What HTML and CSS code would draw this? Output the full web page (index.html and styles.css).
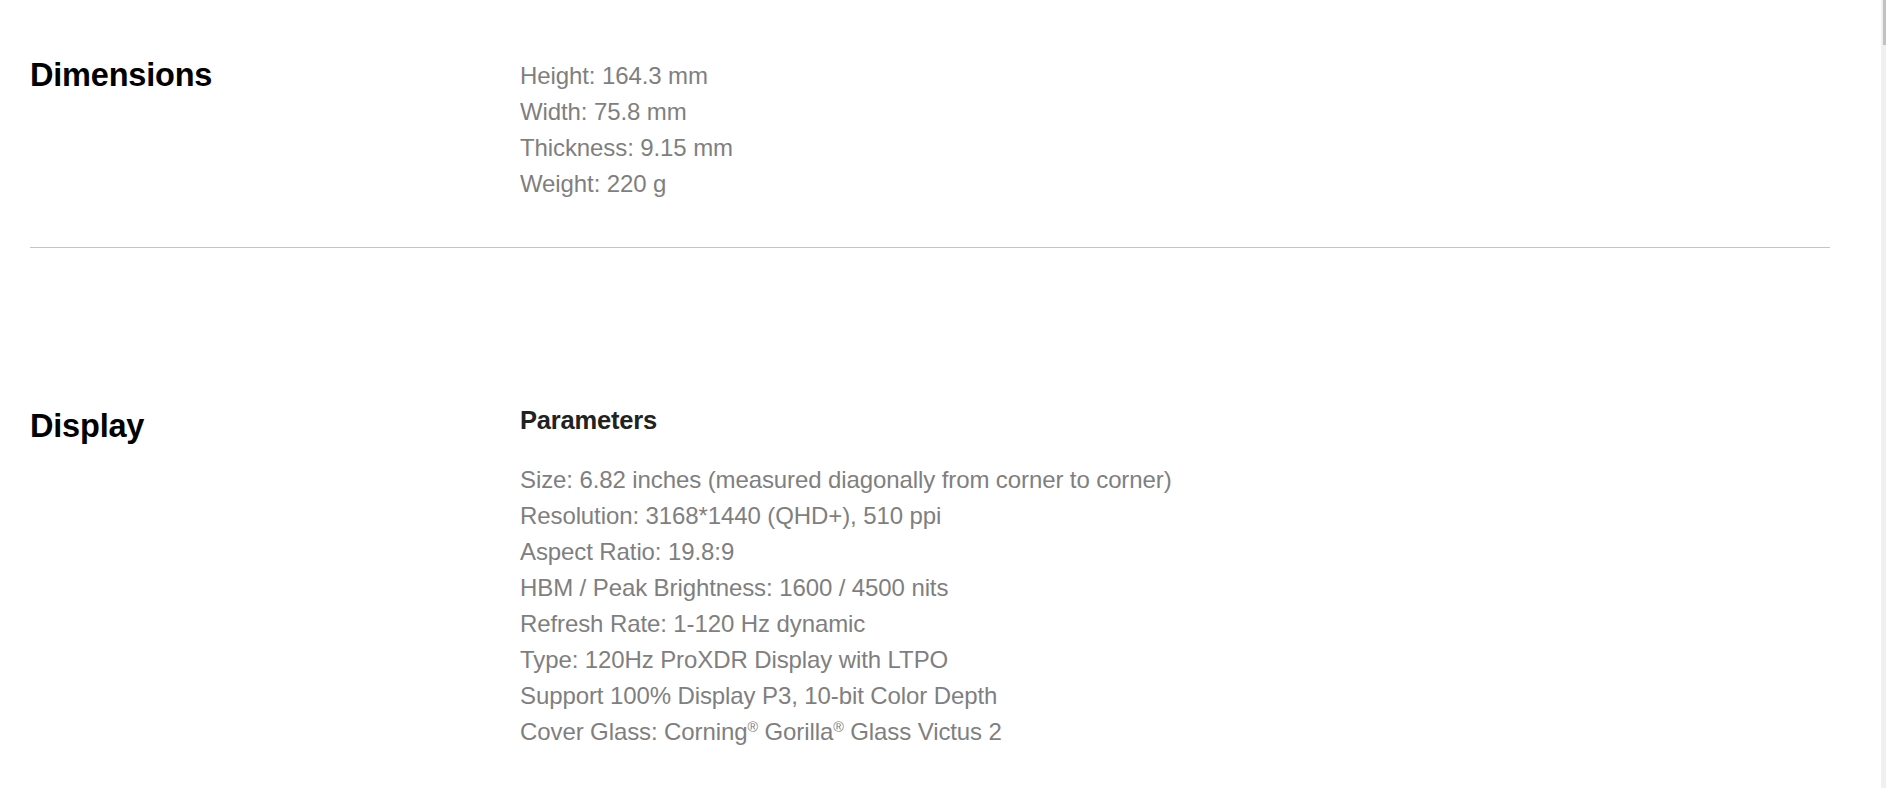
FILE: index.html
```html
<!DOCTYPE html>
<html lang="en">
<head>
<meta charset="utf-8">
<title>Specs</title>
<link rel="stylesheet" href="styles.css">
</head>
<body>
<main class="specs">
  <section class="spec spec--first">
    <h2 class="spec__title">Dimensions</h2>
    <div class="spec__body">
      <ul class="spec__list">
        <li>Height: 164.3 mm</li>
        <li>Width: 75.8 mm</li>
        <li>Thickness: 9.15 mm</li>
        <li>Weight: 220 g</li>
      </ul>
    </div>
  </section>
  <section class="spec spec--display">
    <h2 class="spec__title">Display</h2>
    <div class="spec__body">
      <h3 class="spec__sub">Parameters</h3>
      <ul class="spec__list">
        <li>Size: 6.82 inches (measured diagonally from corner to corner)</li>
        <li>Resolution: 3168*1440 (QHD+), 510 ppi</li>
        <li>Aspect Ratio: 19.8:9</li>
        <li>HBM / Peak Brightness: 1600 / 4500 nits</li>
        <li>Refresh Rate: 1-120 Hz dynamic</li>
        <li>Type: 120Hz ProXDR Display with LTPO</li>
        <li>Support 100% Display P3, 10-bit Color Depth</li>
        <li>Cover Glass: Corning<sup>®</sup> Gorilla<sup>®</sup> Glass Victus 2</li>
      </ul>
    </div>
  </section>
</main>
<div class="scrollbar" aria-hidden="true"><div class="scrollbar__thumb"></div></div>
</body>
</html>
```
FILE: styles.css
```css
html {
  background: #fff;
}
body {
  margin: 0;
  font-family: "Liberation Sans", Arial, sans-serif;
  color: #000;
  background: #fff;
}
.specs {
  width: 1800px;
  margin-left: 30px;
  padding-bottom: 120px;
}
.spec {
  display: grid;
  grid-template-columns: 490px 1fr;
  align-items: start;
}
.spec--first {
  padding-top: 54px;
  padding-bottom: 45px;
  border-bottom: 1px solid #c4c4c4;
}
.spec--first .spec__list {
  margin-top: 4px;
}
.spec--display {
  padding-top: 157px;
}
.spec__title {
  margin: 2px 0 0;
  font-size: 32.5px;
  font-weight: 700;
  line-height: 38px;
  letter-spacing: -0.2px;
  color: #000;
}
.spec__sub {
  margin: 0 0 26px;
  font-size: 25.5px;
  font-weight: 700;
  line-height: 31px;
  letter-spacing: -0.2px;
  color: #222;
}
.spec__list {
  margin: 0;
  padding: 0;
  list-style: none;
  font-size: 24px;
  line-height: 36px;
  color: #7f7f7f;
  letter-spacing: -0.1px;
}
.spec__list sup {
  font-size: 0.6em;
  line-height: 0;
  vertical-align: 0.55em;
}
.scrollbar {
  position: fixed;
  top: 0;
  right: 0;
  width: 5px;
  height: 100%;
  background: #f0f0f0;
}
.scrollbar__thumb {
  margin-left: 2px;
  width: 3px;
  height: 45px;
  background: #c1c1c1;
}
```
